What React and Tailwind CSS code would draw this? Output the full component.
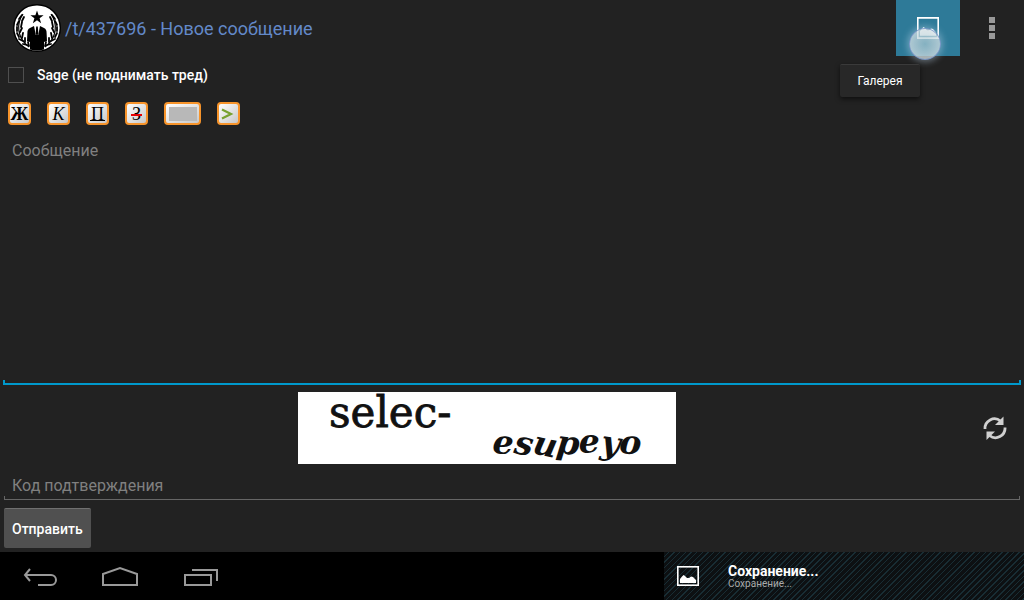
import { useState } from "react";

function LogoIcon() {
  return (
    <svg viewBox="0 0 48 48" className="w-12 h-12 shrink-0" aria-hidden="true">
      <circle cx="24" cy="24" r="24" fill="#000" />
      <circle cx="24" cy="24" r="22.6" fill="#fff" />
      {/* Laurel wreath */}
      <g fill="none" stroke="#000" strokeWidth="1.2">
        <path d="M10 10C3 20 4 34 16 43" />
        <path d="M38 10C45 20 44 34 32 43" />
      </g>
      <g fill="none" stroke="#000" strokeWidth="1.8" strokeLinecap="round">
        <path d="M9 11l-3 4M11 13l-2 4M6 17l-2 4M9 18l-1 5M4 23l0 4M9 24l-2 4M4 29l2 4M10 29l-1 5M6 35l4 2M12 34l0 4M10 40l4 1M15 38l1 4" />
        <path d="M39 11l3 4M37 13l2 4M42 17l2 4M39 18l1 5M44 23l0 4M39 24l2 4M44 29l-2 4M38 29l1 5M42 35l-4 2M36 34l0 4M38 40l-4 1M33 38l-1 4" />
      </g>
      {/* Star and suit */}
      <path d="M24 6.500l1.600 4.800h5l-4 3 1.500 4.900-4.100-3-4.100 3 1.500-4.900-4-3h5z" fill="#000" />
      <path d="M21 22l-4 2c-2 1-2.600 2.600-2.600 5l-.4 8 3 1v7.500q7 2 14 0V38l3-1-.4-8c0-2.400-.6-4-2.600-5l-4-2z" fill="#000" />
      <path d="M21 22h6l-1 5-.8 4h-2.400l-.8-4z" fill="#fff" />
      <path d="M23.200 22.500h1.600l.5 7-1.300 3-1.300-3z" fill="#000" />
    </svg>
  );
}

function PictureIcon({ className }) {
  return (
    <svg viewBox="0 0 22 20" preserveAspectRatio="none" className={className} fill="none" aria-hidden="true">
      <rect x="0.800" y="0.800" width="20.400" height="18.400" stroke="currentColor" strokeWidth="1.600" />
      <path d="M3 17v-4l2-2.500 1.500-1.500 1.500 1 2 2h2l2-1.500 2 .5 3 3v3z" fill="currentColor" />
    </svg>
  );
}

function FormatButton({ label, wide, className = "", children }) {
  return (
    <button
      type="button"
      aria-label={label}
      className={`relative flex items-center justify-center h-[23px] rounded border-2 border-[#f7942b] bg-linear-to-br from-white to-[#c8c8c8] text-black text-lg leading-5 font-['Liberation_Serif',serif] ${wide ? "w-[37px]" : "w-[23px]"} ${className}`}
    >
      {children}
    </button>
  );
}

function Toolbar() {
  return (
    <div className="flex gap-4 px-2">
      <FormatButton label="Жирный" className="font-bold">Ж</FormatButton>
      <FormatButton label="Курсив" className="italic">К</FormatButton>
      <FormatButton label="Подчёркнутый">
        П
        <span className="absolute inset-x-0.5 bottom-0.5 h-px bg-black" />
      </FormatButton>
      <FormatButton label="Зачёркнутый">
        З
        <span className="absolute inset-x-1 top-[10px] h-0.5 bg-[#e60000]" />
      </FormatButton>
      <FormatButton label="Спойлер" wide>
        <span className="w-7 h-[14px] bg-[#b8b8b8]" />
      </FormatButton>
      <FormatButton label="Цитата">
        <svg viewBox="0 0 19 19" className="w-[19px] h-[19px]" fill="none" aria-hidden="true">
          <path d="M3 5.500l9 4.500-9 4.500" stroke="#78a22f" strokeWidth="2.200" />
        </svg>
      </FormatButton>
    </div>
  );
}

function Header() {
  return (
    <header className="flex h-14 shrink-0">
      <div className="flex items-center gap-1 pl-[13px] grow">
        <LogoIcon />
        <h1 className="pt-0.5 text-lg text-[#6389c9]">/t/437696 - Новое сообщение</h1>
      </div>

      <div className="relative">
        <button
          type="button"
          aria-label="Галерея"
          aria-describedby="gallery-tip"
          className="flex items-center justify-center w-16 h-14 bg-[#2e7a98] text-white"
        >
          <PictureIcon className="w-[22px] h-[22px]" />
        </button>
        {/* Touch point */}
        <span className="absolute left-[13px] top-7 w-8 h-8 rounded-full border border-[#6f8fc4]/80 bg-radial from-[#a9c8d2]/70 to-[#e4e8ea]/80 shadow-[0_0_6px_2px_rgba(190,215,235,0.4)]" />
        <div
          id="gallery-tip"
          role="tooltip"
          className="absolute right-10 top-16 w-20 h-[33px] flex items-center justify-center rounded-xs border-t border-[#3a3a3a] bg-[#282828] text-white text-xs shadow-[0_2px_5px_rgba(0,0,0,0.6)]"
        >
          Галерея
        </div>
      </div>

      <button type="button" aria-label="Меню" className="flex flex-col items-center justify-center gap-0.5 w-16">
        <span className="w-1.5 h-1.5 bg-[#999]" />
        <span className="w-1.5 h-1.5 bg-[#999]" />
        <span className="w-1.5 h-1.5 bg-[#999]" />
      </button>
    </header>
  );
}

function Captcha() {
  return (
    <div className="flex items-center mt-[7px]">
      <div className="flex justify-center grow">
        <svg viewBox="0 0 378 72" className="w-[378px] h-[72px] overflow-visible bg-white" role="img" aria-label="selec- esupeyo">
          <text x="31" y="35" fontSize="42" fill="#111" stroke="#111" strokeWidth="0.800" fontFamily="'DejaVu Serif', serif">selec-</text>
          <text x="194" y="61" fontSize="33" fontWeight="bold" fontStyle="italic" fill="#111" fontFamily="'DejaVu Serif', serif" rotate="4 10 12 6 0 8 4">
            esupeyo
          </text>
        </svg>
      </div>
      <button type="button" aria-label="Обновить" className="flex justify-end w-[50px] pr-[17px]">
        <svg viewBox="0 0 26 26" className="w-[26px] h-[26px]" fill="none" stroke="#d0d0d0" strokeWidth="2.800" aria-hidden="true">
          <path d="M4 14a9.500 9.500 0 0 1 15.500-8" />
          <path d="M24 12.500a9.500 9.500 0 0 1-15.500 8" />
          <path d="M22.500 1.500v8.500h-8.500z" fill="#d0d0d0" stroke="none" />
          <path d="M5.500 25v-8.500h8.500z" fill="#d0d0d0" stroke="none" />
        </svg>
      </button>
    </div>
  );
}

function NavBar() {
  return (
    <footer className="flex h-12 shrink-0 bg-black">
      <nav className="flex items-center grow text-[#999]">
        <button type="button" aria-label="Назад" className="flex justify-center w-20">
          <svg viewBox="0 0 34 20" className="w-[34px] h-5" fill="none" stroke="currentColor" strokeWidth="2" aria-hidden="true">
            <path d="M7 3L2 9l5 6M2 9h26a4.500 4.500 0 0 1 0 10H15" />
          </svg>
        </button>
        <button type="button" aria-label="Домой" className="flex justify-center w-20">
          <svg viewBox="0 0 36 20" className="w-9 h-5" fill="none" stroke="currentColor" strokeWidth="2" aria-hidden="true">
            <path d="M1 19V8l17-6 17 6v11z" />
          </svg>
        </button>
        <button type="button" aria-label="Недавние" className="flex justify-center w-[82px]">
          <svg viewBox="0 0 34 20" className="w-[34px] h-5" fill="none" stroke="currentColor" strokeWidth="2" aria-hidden="true">
            <path d="M1 9h26v10H1zM8 4h25v11" />
          </svg>
        </button>
      </nav>

      <div className="flex items-center w-[360px] pl-[13px] text-white bg-[#0d1012] bg-[repeating-linear-gradient(135deg,transparent_0px,transparent_3px,#182d34_3px,#182d34_4px)]">
        <PictureIcon className="w-[22px] h-5" />
        <div className="pl-[29px]">
          <p className="text-sm leading-4 font-bold">Сохранение...</p>
          <p className="text-[10px] leading-[10px] text-[#aaa]">Сохранение...</p>
        </div>
      </div>
    </footer>
  );
}

export default function App() {
  const [sage, setSage] = useState(false);
  const [message, setMessage] = useState("");
  const [code, setCode] = useState("");

  return (
    <div className="flex flex-col min-h-screen bg-[#222] font-['Roboto',sans-serif]">
      <Header />

      <form className="flex flex-col grow" onSubmit={(e) => e.preventDefault()}>
        <label className="flex items-center gap-[13px] h-[38px] mb-2 px-2 text-sm font-medium text-white">
          <input
            type="checkbox"
            checked={sage}
            onChange={(e) => setSage(e.target.checked)}
            className="appearance-none w-4 h-4 border border-[#4f4f4f] checked:bg-[#0099cc]"
          />
          Sage (не поднимать тред)
        </label>

        <Toolbar />

        {/* Message field with bracket underline */}
        <div className="flex flex-col grow mx-[3px]">
          <textarea
            aria-label="Сообщение"
            placeholder="Сообщение"
            value={message}
            onChange={(e) => setMessage(e.target.value)}
            className="grow px-[9px] pt-[14px] resize-none outline-none text-base leading-6 text-white placeholder:text-[#808080]"
          />
          <div className="h-[5px] border-2 border-t-0 border-[#0099cc]" />
        </div>

        <Captcha />

        <div className="flex flex-col mx-1 mt-2">
          <input
            type="text"
            aria-label="Код подтверждения"
            placeholder="Код подтверждения"
            value={code}
            onChange={(e) => setCode(e.target.value)}
            className="h-6 mt-0.5 px-2 outline-none text-base text-white placeholder:text-[#808080]"
          />
          <div className="h-1 -mt-0.5 border border-t-0 border-[#666]" />
        </div>

        <button
          type="submit"
          className="self-start h-10 mx-1 mt-2 mb-1 px-2 rounded-xs border-t border-[#707070] bg-[#505050] text-sm font-medium text-white"
        >
          Отправить
        </button>
      </form>

      <NavBar />
    </div>
  );
}
